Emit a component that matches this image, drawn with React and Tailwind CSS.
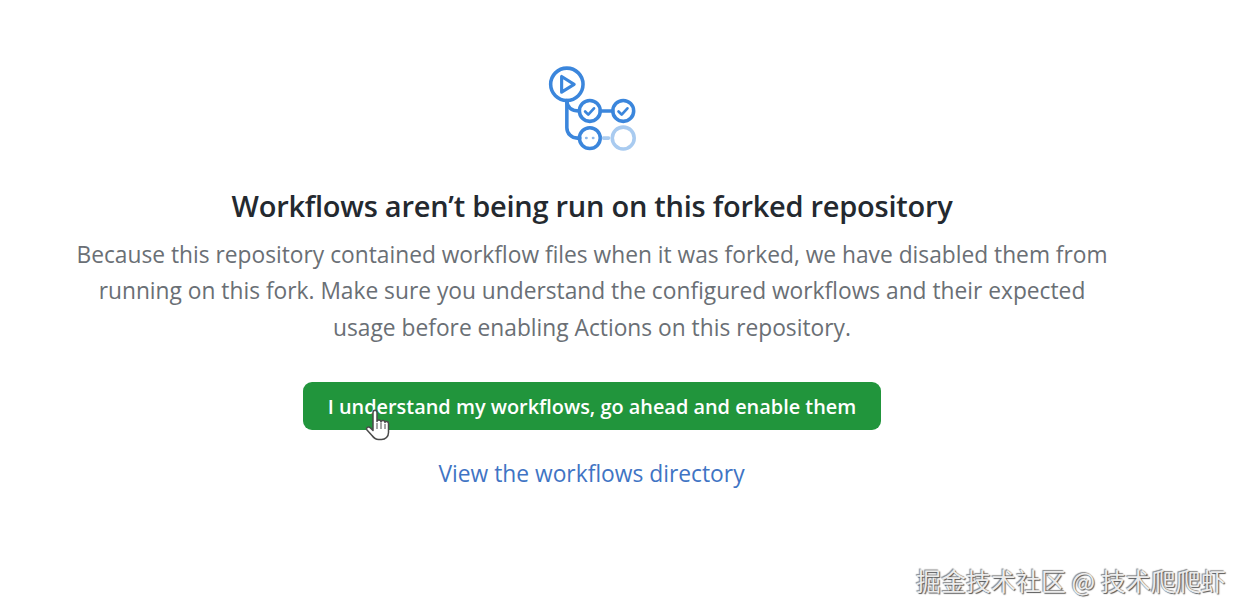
export default function App() {
  return (
    <div className="relative w-[1245px] h-[613px] overflow-hidden bg-white font-['Open_Sans','Noto_Sans',sans-serif]">
      <div className="flex w-[1185px] flex-col items-center pt-[65px]">
        <svg width="94" height="94" viewBox="0 0 90 90" fill="none" className="ml-[3px]" stroke="#3b86dc" strokeWidth="3.4" strokeLinecap="round" strokeLinejoin="round">
          <circle cx="19" cy="18.500" r="15.500" />
          <path d="M14 11v15l12-7.500z" strokeWidth="3" />
          <path d="M19 34v26a10 10 0 0 0 10 10h2.500" />
          <path d="M19 34c0 6 4 10 12 10" />
          <circle cx="41" cy="44" r="10" />
          <path d="M36.500 44.500l3 3 5.500-6" strokeWidth="2.600" />
          <path d="M51 44h12" />
          <circle cx="73" cy="44" r="10" />
          <path d="M68.500 44.500l3 3 5.500-6" strokeWidth="2.600" />
          <circle cx="41" cy="70" r="10" />
          <path d="M37.500 70h.4M44 70h.4" strokeWidth="2.400" stroke="#8db8ea" />
          <path d="M54 70h5" stroke="#a9cbf0" />
          <circle cx="73" cy="70" r="10.500" stroke="#a9cbf0" />
        </svg>
        <h1 className="mt-[28px] ml-[-1px] whitespace-nowrap text-[29px] leading-[38px] font-semibold tracking-[-0.25px] text-[#24292f]">
          Workflows aren’t being run on this forked repository
        </h1>
        <div className="mt-[12px] ml-[-1px] w-[1060px] text-center text-[22.750px] leading-[36.400px] text-[#6a6f75]">
          <p>Because this repository contained workflow files when it was forked, we have disabled them from</p>
          <p>running on this fork. Make sure you understand the configured workflows and their expected</p>
          <p>usage before enabling Actions on this repository.</p>
        </div>
        <button className="relative mt-[36px] ml-[-1px] flex h-[48px] w-[578px] items-center justify-center rounded-[9px] bg-[#21953c] pt-[2px] text-[19.900px] font-semibold text-white">
          I understand my workflows, go ahead and enable them
          <svg width="28" height="36" viewBox="0 0 28 36" className="absolute left-[62px] top-[27px]" fill="#ffffff" stroke="#4a4a4a" strokeWidth="1.500" strokeLinejoin="round">
            <path d="M8 3.500c0-3 4-3 4 0v9c0-2 4-2 4 .5 0-2 4-2 4 .5 0-1.500 3.500-1.500 3.500 1v9c0 4-3 7-7 7h-3c-3 0-5-2-6.500-4L2 21c-1.500-2.500 1.500-4 3.500-2L8 21.500z" />
            <path d="M12 14v6M16 14v6M20 15v5" fill="none" strokeWidth="1" />
          </svg>
        </button>
        <a className="mt-[28px] ml-[-2px] text-[22.800px] leading-[32px] text-[#3f74c4]">View the workflows directory</a>
      </div>
      <div className="absolute left-[916px] top-[564px] whitespace-nowrap text-[25px] leading-[32px] text-[#ececec] font-['Noto_Sans_CJK_SC',sans-serif] [text-shadow:1px_1px_1px_#555,-1px_-1px_1px_#888]">
        掘金技术社区 @ 技术爬爬虾
      </div>
    </div>
  );
}
